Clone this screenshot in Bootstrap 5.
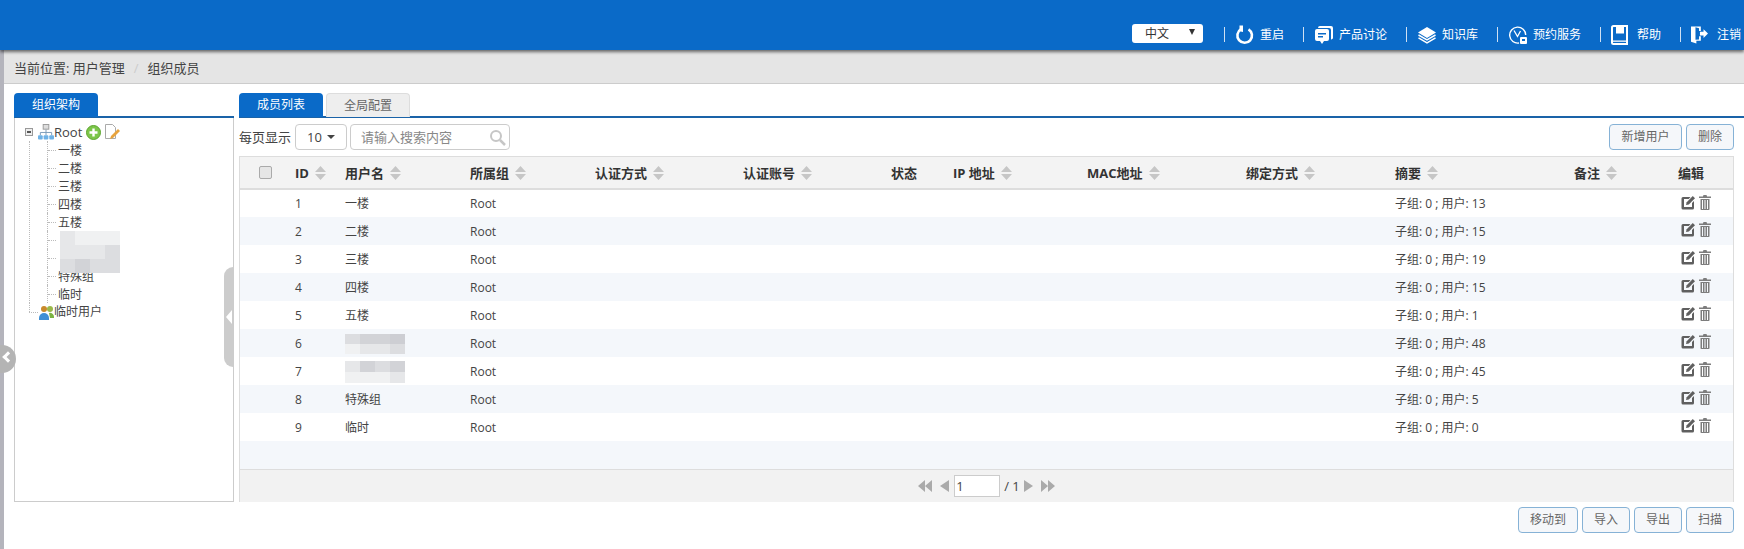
<!DOCTYPE html>
<html lang="zh-CN">
<head>
<meta charset="utf-8">
<title>组织成员</title>
<link href="https://cdn.jsdelivr.net/npm/bootstrap@5.3.0/dist/css/bootstrap.min.css" rel="stylesheet">
<style>
html,body{height:549px;overflow:hidden}
body{font-family:"Open Sans","Noto Sans CJK SC",sans-serif;font-size:12px;color:#444;background:#fff;line-height:18px}
.sprite{display:none}
.topbar{height:50px;background:#0a6ac8;box-shadow:0 2px 3px rgba(0,0,0,.55);position:relative;z-index:2;padding:24px 3px 0 0;color:#fff}
.lang-sel{width:71px;height:19px;background:#fff;border-radius:3px;color:#333;padding:0 8px 0 13px;line-height:20px;margin-right:21px}
.lang-sel i{border-left:3px solid transparent;border-right:3px solid transparent;border-top:6px solid #333;margin-bottom:4px}
.top-item{border-left:1px solid #cfe0f3;height:15px;padding-left:10px;margin:3px 19px 0 0;line-height:15px;white-space:nowrap}
.top-item svg{margin-right:5px;flex:none}
.shell{height:499px;border-left:4px solid #b4b4bc;position:relative}
.crumbs{background:#e5e5e5;height:34px;border-bottom:1px solid #ccc;padding:9px 0 0 10px;font-size:13px;color:#444;margin:0;--bs-breadcrumb-margin-bottom:0;--bs-breadcrumb-divider-color:#ccc;--bs-breadcrumb-item-padding-x:9px;--bs-breadcrumb-item-active-color:#444}
.work{padding:9px 10px 0 10px;gap:5px}
.side{width:220px;flex:none}
.main-col{width:1495px;flex:none}
.tab-strip{height:25px;border-bottom:2px solid #1a63a8;gap:3px}
.main-col .tab-strip{margin-right:-10px}
.tab-on,.tab-off{width:84px;height:24px;line-height:24px;text-align:center;border-radius:4px 4px 0 0}
.tab-on{background:#0a6ac8;color:#fff}
.tab-off{background:#eee;border:1px solid #ddd;border-bottom:0;color:#666}
.side-box{height:384px;border:1px solid #ccc;border-top:0;position:relative;padding:5px 0 0 10px;color:#444}
.tree-row{height:18px;white-space:nowrap}
.root-name{font-size:13px}
.exp{width:8px;height:8px;border:1px solid #999;background:#eee;position:relative;margin-right:5px;flex:none}
.exp::after{content:"";position:absolute;left:1px;right:1px;top:2px;height:2px;background:#555}
.kids{margin-left:4px;border-left:1px dotted #bbb;padding-left:17px;height:162px}
.kid{height:18px;line-height:20px;padding-left:10px;position:relative;white-space:nowrap;border-left:1px dotted #bbb}
.kid::before{content:"";position:absolute;left:0;top:9px;width:8px;border-top:1px dotted #bbb}
.temp-row{margin-left:4px;position:relative;padding-left:10px}
.temp-row::before{content:"";position:absolute;left:0;top:9px;width:9px;border-top:1px dotted #bbb}
.temp-row::after{content:"";position:absolute;left:0;top:0;height:9px;border-left:1px dotted #bbb}
.mos-tree{position:absolute;left:45px;top:113px;display:grid;grid-template-columns:repeat(4,15px);grid-auto-rows:14px}
.mos-a,.mos-b{display:grid;grid-template-columns:repeat(4,15px);width:60px}
.mos-a{grid-auto-rows:10px}
.mos-b{grid-auto-rows:11px}
.t1{background:#d2d3d7}.t2{background:#dcdde0}.t3{background:#e6e7e9}.t4{background:#f0f1f2}.t5{background:#cdced3}
.grip{position:absolute;right:0;top:149px;width:9px;height:100px;background:#ccc;border-radius:9px 0 0 9px}
.grip::after{content:"";position:absolute;left:2px;top:43px;border-right:6px solid #fff;border-top:7px solid transparent;border-bottom:7px solid transparent}
.fold-dot{position:absolute;left:-4px;top:295px;width:16px;height:28px;background:#b4b4b4;border-radius:0 14px 14px 0;z-index:3}
.fold-dot::after{content:"";position:absolute;left:4px;top:8px;width:8px;height:8px;border-left:3px solid #fff;border-bottom:3px solid #fff;transform:rotate(45deg)}
.toolbar{height:38px;padding-top:6px;font-size:13px}
.per-sel{width:52px;height:26px;border:1px solid #ccc;border-radius:4px;margin:0 3px 0 4px;font-size:13px;justify-content:center;gap:5px}
.per-sel i{border-left:4px solid transparent;border-right:4px solid transparent;border-top:4px solid #444}
.find-box{width:160px;height:26px;border:1px solid #ccc;border-radius:4px;padding:0 3px 0 10px;color:#888;font-size:13px}
.act-btn{height:26px;padding:0;font-size:12px;color:#666;background:#f5f7fa;border:1px solid #86b2d6;border-radius:4px;line-height:24px;--bs-btn-padding-y:0}
.w-72{width:73px}.w-48{width:48px}.w-60{width:60px}
.grid-box{width:1495px;border:1px solid #ddd;height:346px}
.grid-tbl{table-layout:fixed;width:1493px;margin:0;--bs-table-color:#444;font-size:12px}
.grid-tbl th{height:32px;background:#f3f3f3;border-bottom:2px solid #ddd;font-size:13px;font-weight:700;color:#333;padding:0;vertical-align:middle;white-space:nowrap}
.grid-tbl td{height:28px;padding:1px 0 0;border:0;vertical-align:middle;white-space:nowrap}
.grid-tbl td:last-child{padding-left:3px}
.grid-tbl td:last-child svg{vertical-align:-1px}
.grid-tbl td:last-child svg+svg{margin-left:1px}
.grid-tbl tbody tr:nth-child(even) td{background:#f4f7fb}
.grid-tbl th svg{margin-left:6px;vertical-align:-2px}
.chk{width:13px;height:13px;border:1px solid #aaa;background:#e6e6e6;border-radius:2px;display:block;margin-left:19px}
.pager{height:33px;background:#f2f2f2;border-top:1px solid #ddd;color:#444;font-size:13px}
.page-in{width:46px;height:22px;border:1px solid #ccc;background:#fff;padding-left:1px;line-height:20px;margin:0 4px 0 5px}
.foot-btns{margin-top:5px;gap:4px;width:1495px}
</style>
</head>
<body>
<svg class="sprite" aria-hidden="true">
<symbol id="ico-sort" viewBox="0 0 11 14"><path d="M5.500 0 11 6H0zM0 8h11l-5.500 6z" fill="#c6c6c6"/></symbol>
<symbol id="ico-edit" viewBox="0 0 14 14"><path d="M2 1h7.500L7.700 3H3v8h8V7l2-2v7a1.500 1.500 0 0 1-1.500 1.500h-9.500A1.500 1.500 0 0 1 .5 12V2.500A1.500 1.500 0 0 1 2 1z" fill="#5f5f5f"/><path d="M11.800 0 14 2.200 7.800 8.400l-2.800.7.700-2.800z" fill="#5f5f5f"/></symbol>
<symbol id="ico-trash" viewBox="0 0 12 15"><path d="M4.500 0h3l.6 1.500H12V3H0V1.500h3.900zM1.500 4h9v10.200a.8.8 0 0 1-.8.800H2.300a.8.8 0 0 1-.8-.8zM3 5v9h1V5zm2.500 0v9h1V5zM8 5v9h1V5z" fill="#7d7d7d" fill-rule="evenodd"/></symbol>
</svg>

<header class="topbar d-flex justify-content-end align-items-start">
  <div class="lang-sel d-flex justify-content-between align-items-center"><span>中文</span><i></i></div>
  <div class="top-item d-flex align-items-center">
    <svg width="20" height="20" viewBox="0 0 20 20"><path d="M13.500 4.300A7.300 7.300 0 1 1 6 4.200" fill="none" stroke="#fff" stroke-width="2.600"/><path d="M4.500 0.500h3.500v6.500l-3.500-.8z" fill="#fff"/></svg>重启</div>
  <div class="top-item d-flex align-items-center">
    <svg width="20" height="20" viewBox="0 0 20 20"><path d="M6 1h11a2 2 0 0 1 2 2v9a2 2 0 0 1-2 2.500V5a2 2 0 0 0-2-2H4a2 2 0 0 1 2-2z" fill="#fff"/><path fill-rule="evenodd" d="M3 4h10a2 2 0 0 1 2 2v8a2 2 0 0 1-2 2h-3l-2 3-2-3H3a2 2 0 0 1-2-2V6a2 2 0 0 1 2-2zm1 4v1.500h8V8zm0 3v1.500h5V11z" fill="#fff"/></svg>产品讨论</div>
  <div class="top-item d-flex align-items-center">
    <svg width="20" height="20" viewBox="0 0 20 20"><path d="M10 2l9 5.500-9 5.500-9-5.500z" fill="#fff"/><path d="M1.500 10l8.500 5 8.500-5M1.500 12.800l8.500 5 8.500-5" fill="none" stroke="#fff" stroke-width="1.500"/></svg>知识库</div>
  <div class="top-item d-flex align-items-center">
    <svg width="20" height="20" viewBox="0 0 20 20"><path d="M11 18A8 8 0 1 1 17.700 10" fill="none" stroke="#fff" stroke-width="1.400"/><path d="M6 5.500l3.500 6L12.500 6" fill="none" stroke="#fff" stroke-width="1.300"/><rect x="12" y="12" width="7" height="7" rx="1" fill="#fff"/><rect x="14" y="14" width="3" height="2" fill="#0a6ac8"/></svg>预约服务</div>
  <div class="top-item d-flex align-items-center">
    <svg width="17" height="20" viewBox="0 0 17 20"><path fill="none" stroke="#fff" stroke-width="2" d="M1 2.500A1.500 1.500 0 0 1 2.500 1H16v18H2.500A1.500 1.500 0 0 1 1 17.500z"/><path d="M1 15.500h15v1.300H1z" fill="#fff"/><rect x="5" y="1" width="8" height="7.500" fill="#fff"/></svg><span class="ms-1">帮助</span></div>
  <div class="top-item d-flex align-items-center me-0">
    <svg width="17" height="19" viewBox="0 0 19 20"><path d="M0 1h11v5H9V3L5 1.800V16l4-.5V12h2v5H6v3l-6-2z" fill="#fff"/><path d="M10 7h4V4l5 5-5 5v-3h-4z" fill="#fff"/></svg><span class="ms-1">注销</span></div>
</header>

<div class="shell">
  <ol class="breadcrumb crumbs">
    <li class="breadcrumb-item">当前位置: 用户管理</li>
    <li class="breadcrumb-item active">组织成员</li>
  </ol>

  <div class="work d-flex align-items-start">
    <aside class="side">
      <div class="tab-strip d-flex"><div class="tab-on">组织架构</div></div>
      <div class="side-box">
        <div class="tree-row d-flex align-items-center">
          <span class="exp"></span>
          <svg width="16" height="16" viewBox="0 0 17 17"><rect x="5.500" y="0.500" width="6" height="5" fill="#ddd" stroke="#999"/><path d="M8.500 6v3M2.500 12V9h12v3M8.500 9v3" stroke="#7a9ab8" fill="none"/><rect x="0" y="12" width="5" height="4.500" rx="1" fill="#6fb2e6"/><rect x="6" y="12" width="5" height="4.500" rx="1" fill="#6fb2e6"/><rect x="12" y="12" width="5" height="4.500" rx="1" fill="#6fb2e6"/></svg>
          <span class="root-name">Root</span>
          <svg width="15" height="15" viewBox="0 0 15 15" class="ms-1"><circle cx="7.500" cy="7.500" r="7" fill="#7cc64a" stroke="#5da52f"/><path d="M6.300 3.500h2.400v2.800h2.800v2.400H8.700v2.800H6.300V8.700H3.500V6.300h2.800z" fill="#fff"/></svg>
          <svg width="15" height="16" viewBox="0 0 15 16" class="ms-1"><path d="M.5.500h7l3 3v11H.5z" fill="#fff" stroke="#aaa"/><path d="M13 5l2 2-7 7-3 1 1-3z" fill="#e8a33d"/></svg>
        </div>
        <div class="kids">
          <div class="kid">一楼</div>
          <div class="kid">二楼</div>
          <div class="kid">三楼</div>
          <div class="kid">四楼</div>
          <div class="kid">五楼</div>
          <div class="kid">&nbsp;</div>
          <div class="kid">&nbsp;</div>
          <div class="kid">特殊组</div>
          <div class="kid">临时</div>
        </div>
        <div class="tree-row temp-row d-flex align-items-center">
          <svg width="15" height="15" viewBox="0 0 15 15"><circle cx="5" cy="4" r="3" fill="#c98a2b"/><circle cx="11" cy="4" r="3" fill="#9ab84a"/><path d="M0 13a5 5 0 0 1 10 0v2H0z" fill="#3f8fd6"/><path d="M10 8a4 4 0 0 1 5 4v1h-4z" fill="#7cb342"/></svg>
          <span>临时用户</span>
        </div>
        <div class="mos-tree">
          <span class="t3"></span><span class="t4"></span><span class="t4"></span><span class="t4"></span>
          <span class="t3"></span><span class="t3"></span><span class="t3"></span><span class="t2"></span>
          <span class="t2"></span><span class="t1"></span><span class="t2"></span><span class="t2"></span>
        </div>
        <div class="grip"></div>
      </div>
    </aside>

    <main class="main-col">
      <div class="tab-strip d-flex">
        <div class="tab-on">成员列表</div>
        <div class="tab-off">全局配置</div>
      </div>
      <div class="toolbar d-flex align-items-start">
        <span class="lh-lg">每页显示</span>
        <div class="per-sel d-flex align-items-center"><span>10</span><i></i></div>
        <div class="find-box d-flex align-items-center justify-content-between">
          <span>请输入搜索内容</span>
          <svg width="17" height="17" viewBox="0 0 17 17"><circle cx="7" cy="7" r="5" fill="none" stroke="#c6c6c6" stroke-width="2"/><path d="m11 11 5 5" stroke="#c6c6c6" stroke-width="2.500"/></svg>
        </div>
        <div class="ms-auto d-flex gap-1">
          <button class="btn act-btn w-72">新增用户</button>
          <button class="btn act-btn w-48">删除</button>
        </div>
      </div>
      <div class="grid-box">
        <table class="table grid-tbl">
          <colgroup><col style="width:55px"><col style="width:50px"><col style="width:125px"><col style="width:125px"><col style="width:148px"><col style="width:148px"><col style="width:62px"><col style="width:134px"><col style="width:159px"><col style="width:149px"><col style="width:179px"><col style="width:104px"><col style="width:55px"></colgroup>
          <thead><tr>
            <th><span class="chk"></span></th>
            <th>ID<svg width="11" height="14"><use href="#ico-sort"/></svg></th>
            <th>用户名<svg width="11" height="14"><use href="#ico-sort"/></svg></th>
            <th>所属组<svg width="11" height="14"><use href="#ico-sort"/></svg></th>
            <th>认证方式<svg width="11" height="14"><use href="#ico-sort"/></svg></th>
            <th>认证账号<svg width="11" height="14"><use href="#ico-sort"/></svg></th>
            <th>状态</th>
            <th>IP 地址<svg width="11" height="14"><use href="#ico-sort"/></svg></th>
            <th>MAC地址<svg width="11" height="14"><use href="#ico-sort"/></svg></th>
            <th>绑定方式<svg width="11" height="14"><use href="#ico-sort"/></svg></th>
            <th>摘要<svg width="11" height="14"><use href="#ico-sort"/></svg></th>
            <th>备注<svg width="11" height="14"><use href="#ico-sort"/></svg></th>
            <th>编辑</th>
          </tr></thead>
          <tbody>
            <tr><td></td><td>1</td><td>一楼</td><td>Root</td><td></td><td></td><td></td><td></td><td></td><td></td><td>子组: 0 ; 用户: 13</td><td></td><td><svg width="14" height="14"><use href="#ico-edit"/></svg> <svg width="12" height="15"><use href="#ico-trash"/></svg></td></tr>
            <tr><td></td><td>2</td><td>二楼</td><td>Root</td><td></td><td></td><td></td><td></td><td></td><td></td><td>子组: 0 ; 用户: 15</td><td></td><td><svg width="14" height="14"><use href="#ico-edit"/></svg> <svg width="12" height="15"><use href="#ico-trash"/></svg></td></tr>
            <tr><td></td><td>3</td><td>三楼</td><td>Root</td><td></td><td></td><td></td><td></td><td></td><td></td><td>子组: 0 ; 用户: 19</td><td></td><td><svg width="14" height="14"><use href="#ico-edit"/></svg> <svg width="12" height="15"><use href="#ico-trash"/></svg></td></tr>
            <tr><td></td><td>4</td><td>四楼</td><td>Root</td><td></td><td></td><td></td><td></td><td></td><td></td><td>子组: 0 ; 用户: 15</td><td></td><td><svg width="14" height="14"><use href="#ico-edit"/></svg> <svg width="12" height="15"><use href="#ico-trash"/></svg></td></tr>
            <tr><td></td><td>5</td><td>五楼</td><td>Root</td><td></td><td></td><td></td><td></td><td></td><td></td><td>子组: 0 ; 用户: 1</td><td></td><td><svg width="14" height="14"><use href="#ico-edit"/></svg> <svg width="12" height="15"><use href="#ico-trash"/></svg></td></tr>
            <tr><td></td><td>6</td><td><div class="mos-a"><span class="t2"></span><span class="t1"></span><span class="t1"></span><span class="t5"></span><span class="t4"></span><span class="t3"></span><span class="t3"></span><span class="t2"></span></div></td><td>Root</td><td></td><td></td><td></td><td></td><td></td><td></td><td>子组: 0 ; 用户: 48</td><td></td><td><svg width="14" height="14"><use href="#ico-edit"/></svg> <svg width="12" height="15"><use href="#ico-trash"/></svg></td></tr>
            <tr><td></td><td>7</td><td><div class="mos-b"><span class="t3"></span><span class="t1"></span><span class="t2"></span><span class="t1"></span><span class="t4"></span><span class="t4"></span><span class="t4"></span><span class="t3"></span></div></td><td>Root</td><td></td><td></td><td></td><td></td><td></td><td></td><td>子组: 0 ; 用户: 45</td><td></td><td><svg width="14" height="14"><use href="#ico-edit"/></svg> <svg width="12" height="15"><use href="#ico-trash"/></svg></td></tr>
            <tr><td></td><td>8</td><td>特殊组</td><td>Root</td><td></td><td></td><td></td><td></td><td></td><td></td><td>子组: 0 ; 用户: 5</td><td></td><td><svg width="14" height="14"><use href="#ico-edit"/></svg> <svg width="12" height="15"><use href="#ico-trash"/></svg></td></tr>
            <tr><td></td><td>9</td><td>临时</td><td>Root</td><td></td><td></td><td></td><td></td><td></td><td></td><td>子组: 0 ; 用户: 0</td><td></td><td><svg width="14" height="14"><use href="#ico-edit"/></svg> <svg width="12" height="15"><use href="#ico-trash"/></svg></td></tr>
            <tr><td colspan="13"></td></tr>
          </tbody>
        </table>
        <div class="pager d-flex align-items-center justify-content-center">
          <svg width="14" height="12" viewBox="0 0 14 12" class="me-2"><path d="M7 0v12L0 6zM14 0v12L7 6z" fill="#aaa"/></svg>
          <svg width="9" height="12" viewBox="0 0 9 12"><path d="M9 0v12L0 6z" fill="#aaa"/></svg>
          <span class="page-in">1</span>
          <span>/ 1</span>
          <svg width="9" height="12" viewBox="0 0 9 12" class="ms-1 me-2"><path d="M0 0v12l9-6z" fill="#aaa"/></svg>
          <svg width="14" height="12" viewBox="0 0 14 12"><path d="M0 0v12l7-6zM7 0v12l7-6z" fill="#aaa"/></svg>
        </div>
      </div>
      <div class="foot-btns d-flex justify-content-end">
        <button class="btn act-btn w-60">移动到</button>
        <button class="btn act-btn w-48">导入</button>
        <button class="btn act-btn w-48">导出</button>
        <button class="btn act-btn w-48">扫描</button>
      </div>
    </main>
  </div>
  <div class="fold-dot"></div>
</div>
<script src="https://cdn.jsdelivr.net/npm/bootstrap@5.3.0/dist/js/bootstrap.bundle.min.js"></script>
</body>
</html>
